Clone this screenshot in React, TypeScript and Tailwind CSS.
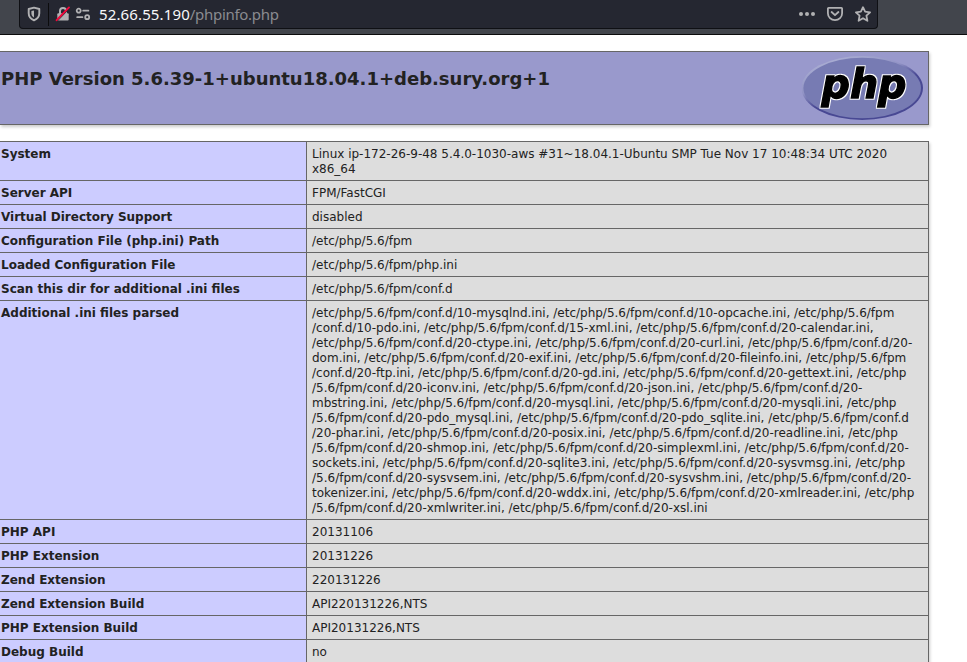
import React from "react";

const iniFiles = [
  "/etc/php/5.6/fpm/conf.d/10-mysqlnd.ini, /etc/php/5.6/fpm/conf.d/10-opcache.ini, /etc/php/5.6/fpm",
  "/conf.d/10-pdo.ini, /etc/php/5.6/fpm/conf.d/15-xml.ini, /etc/php/5.6/fpm/conf.d/20-calendar.ini,",
  "/etc/php/5.6/fpm/conf.d/20-ctype.ini, /etc/php/5.6/fpm/conf.d/20-curl.ini, /etc/php/5.6/fpm/conf.d/20-",
  "dom.ini, /etc/php/5.6/fpm/conf.d/20-exif.ini, /etc/php/5.6/fpm/conf.d/20-fileinfo.ini, /etc/php/5.6/fpm",
  "/conf.d/20-ftp.ini, /etc/php/5.6/fpm/conf.d/20-gd.ini, /etc/php/5.6/fpm/conf.d/20-gettext.ini, /etc/php",
  "/5.6/fpm/conf.d/20-iconv.ini, /etc/php/5.6/fpm/conf.d/20-json.ini, /etc/php/5.6/fpm/conf.d/20-",
  "mbstring.ini, /etc/php/5.6/fpm/conf.d/20-mysql.ini, /etc/php/5.6/fpm/conf.d/20-mysqli.ini, /etc/php",
  "/5.6/fpm/conf.d/20-pdo_mysql.ini, /etc/php/5.6/fpm/conf.d/20-pdo_sqlite.ini, /etc/php/5.6/fpm/conf.d",
  "/20-phar.ini, /etc/php/5.6/fpm/conf.d/20-posix.ini, /etc/php/5.6/fpm/conf.d/20-readline.ini, /etc/php",
  "/5.6/fpm/conf.d/20-shmop.ini, /etc/php/5.6/fpm/conf.d/20-simplexml.ini, /etc/php/5.6/fpm/conf.d/20-",
  "sockets.ini, /etc/php/5.6/fpm/conf.d/20-sqlite3.ini, /etc/php/5.6/fpm/conf.d/20-sysvmsg.ini, /etc/php",
  "/5.6/fpm/conf.d/20-sysvsem.ini, /etc/php/5.6/fpm/conf.d/20-sysvshm.ini, /etc/php/5.6/fpm/conf.d/20-",
  "tokenizer.ini, /etc/php/5.6/fpm/conf.d/20-wddx.ini, /etc/php/5.6/fpm/conf.d/20-xmlreader.ini, /etc/php",
  "/5.6/fpm/conf.d/20-xmlwriter.ini, /etc/php/5.6/fpm/conf.d/20-xsl.ini",
];

const rows: [string, string[]][] = [
  ["System", ["Linux ip-172-26-9-48 5.4.0-1030-aws #31~18.04.1-Ubuntu SMP Tue Nov 17 10:48:34 UTC 2020", "x86_64"]],
  ["Server API", ["FPM/FastCGI"]],
  ["Virtual Directory Support", ["disabled"]],
  ["Configuration File (php.ini) Path", ["/etc/php/5.6/fpm"]],
  ["Loaded Configuration File", ["/etc/php/5.6/fpm/php.ini"]],
  ["Scan this dir for additional .ini files", ["/etc/php/5.6/fpm/conf.d"]],
  ["Additional .ini files parsed", iniFiles],
  ["PHP API", ["20131106"]],
  ["PHP Extension", ["20131226"]],
  ["Zend Extension", ["220131226"]],
  ["Zend Extension Build", ["API220131226,NTS"]],
  ["PHP Extension Build", ["API20131226,NTS"]],
  ["Debug Build", ["no"]],
];

function ShieldIcon() {
  return (
    <svg width="16" height="16" viewBox="0 0 16 16" className="shrink-0">
      <path d="M8 1.6 13.3 3V7.2C13.3 10.8 11 13 8 14.3 5 13 2.7 10.8 2.7 7.2V3Z" fill="none" stroke="#b1b1b3" strokeWidth="1.9" strokeLinejoin="round" />
      <path d="M8 4.4V11.6C6.3 10.6 5.4 9.3 5.4 7.2V5.1Z" fill="#b1b1b3" />
    </svg>
  );
}

function InsecureLockIcon() {
  return (
    <svg width="16" height="16" viewBox="0 0 16 16" className="shrink-0">
      <path d="M5 8V5a3 3 0 0 1 6 0V8" fill="none" stroke="#b1b1b3" strokeWidth="2" />
      <rect x="2.3" y="7.2" width="11.4" height="7.4" rx="1" fill="#b1b1b3" />
      <path d="M2.6 14.8 14.6 2.4" stroke="#252731" strokeWidth="1" />
      <path d="M1.6 14.2 14 1.4" stroke="#f4063a" strokeWidth="1.9" strokeLinecap="round" />
    </svg>
  );
}

function PermissionsIcon() {
  return (
    <svg width="16" height="16" viewBox="0 0 16 16" className="shrink-0" fill="none" stroke="#b1b1b3" strokeWidth="1.8" strokeLinecap="round">
      <circle cx="3.7" cy="4.7" r="2" />
      <path d="M8.2 4.7H13.4M2.2 11.2H7.4" />
      <circle cx="12.2" cy="11.2" r="2" />
    </svg>
  );
}

function PocketIcon() {
  return (
    <svg width="18" height="16" viewBox="0 0 18 16" className="shrink-0" fill="none" stroke="#b1b1b3" strokeWidth="1.8" strokeLinecap="round" strokeLinejoin="round">
      <path d="M2.6 1.9H15.4Q16.1 1.9 16.1 2.6V7.2A7.1 7 0 0 1 1.9 7.2V2.6Q1.9 1.9 2.6 1.9Z" />
      <path d="M5.6 6 9 9.2 12.4 6" />
    </svg>
  );
}

function StarIcon() {
  return (
    <svg width="18" height="18" viewBox="0 0 18 18" className="shrink-0" fill="none" stroke="#b1b1b3" strokeWidth="1.8" strokeLinejoin="round">
      <path d="M9 2.2 11.1 6.7 16.1 7.3 12.4 10.7 13.4 15.8 9 13.2 4.6 15.8 5.6 10.7 1.9 7.3 6.9 6.7Z" />
    </svg>
  );
}

function AddressBar() {
  return (
    <header className="flex h-[35px] items-start border-b border-[#0c0c0d] bg-[#42454c] pl-[19px]">
      <div className="flex h-[29px] w-[859px] items-center rounded-b-[4px] border border-t-0 border-[#0f1014] bg-[#252731] pl-[6px] pr-[5px]">
        <ShieldIcon />
        <div className="ml-[6px] h-[23px] w-px bg-[#0c0c0d]" />
        <div className="ml-[6px] flex gap-[4px]">
          <InsecureLockIcon />
          <PermissionsIcon />
        </div>
        <div className="ml-[8px] flex-1 whitespace-nowrap font-['Noto_Sans',sans-serif] text-[15px] leading-[20px] text-[#8a8b90]">
          <span className="tracking-[0.13px] text-[#f9f9fa]">52.66.55.190</span>
          <span className="tracking-[-0.3px]">/phpinfo.php</span>
        </div>
        <div className="flex items-center gap-[10px]">
          <svg width="18" height="16" viewBox="0 0 18 16" fill="#b1b1b3">
            <circle cx="3" cy="8" r="2" />
            <circle cx="9" cy="8" r="2" />
            <circle cx="15" cy="8" r="2" />
          </svg>
          <PocketIcon />
          <StarIcon />
        </div>
      </div>
    </header>
  );
}

function PhpLogo() {
  return (
    <svg width="121" height="66" viewBox="0 0 121 66" className="shrink-0">
      <defs>
        <linearGradient id="rim" x1="0.2" y1="0" x2="0.8" y2="1">
          <stop offset="0" stopColor="#aeb2d5" />
          <stop offset="0.35" stopColor="#9193c5" />
          <stop offset="0.55" stopColor="#484893" />
          <stop offset="1" stopColor="#484893" />
        </linearGradient>
        <filter id="halo" x="-10%" y="-10%" width="120%" height="120%" colorInterpolationFilters="sRGB">
          <feMorphology in="SourceAlpha" operator="dilate" radius="1" result="grown" />
          <feFlood floodColor="#fff" />
          <feComposite in2="grown" operator="in" result="edge" />
          <feMerge>
            <feMergeNode in="edge" />
            <feMergeNode in="SourceGraphic" />
          </feMerge>
        </filter>
      </defs>
      <ellipse cx="60.2" cy="33" rx="60.8" ry="32" fill="url(#rim)" />
      <ellipse cx="60.2" cy="33" rx="58.8" ry="30.2" fill="#777bb3" />
      <text x="19.5" y="42.5" textLength="85" lengthAdjust="spacingAndGlyphs" fontFamily="DejaVu Sans" fontWeight="bold" fontStyle="oblique" fontSize="40" fill="#000" stroke="#000" strokeWidth="1.3" strokeLinejoin="miter" filter="url(#halo)">php</text>
    </svg>
  );
}

export default function App() {
  return (
    <div className="h-[662px] w-[967px] overflow-hidden bg-white font-['DejaVu_Sans',sans-serif] text-[12px] leading-[15px] text-[#222]">
      <AddressBar />
      <main className="mt-[16px] w-[929px]">
        <section className="flex h-[74px] justify-between border border-l-0 border-[#666] bg-[#9999cc] pl-px pr-[5px] pt-[3px] shadow-[1px_2px_3px_#ccc]">
          <h1 className="mt-[13px] text-[18px] font-bold leading-[22px]">PHP Version 5.6.39-1+ubuntu18.04.1+deb.sury.org+1</h1>
          <PhpLogo />
        </section>
        <section className="mt-[16px] border-r border-t border-[#666] shadow-[1px_2px_3px_#ccc]">
          {rows.map(([name, lines]) => (
            <div key={name} className="flex border-b border-[#666]">
              <div className="w-[307px] border-r border-[#666] bg-[#ccccff] pb-[3px] pl-px pt-[5px] font-bold">{name}</div>
              <div className="flex-1 whitespace-nowrap bg-[#dddddd] pb-[3px] pl-[5px] pt-[5px]">
                {lines.map((line) => (
                  <div key={line}>{line}</div>
                ))}
              </div>
            </div>
          ))}
        </section>
      </main>
    </div>
  );
}
